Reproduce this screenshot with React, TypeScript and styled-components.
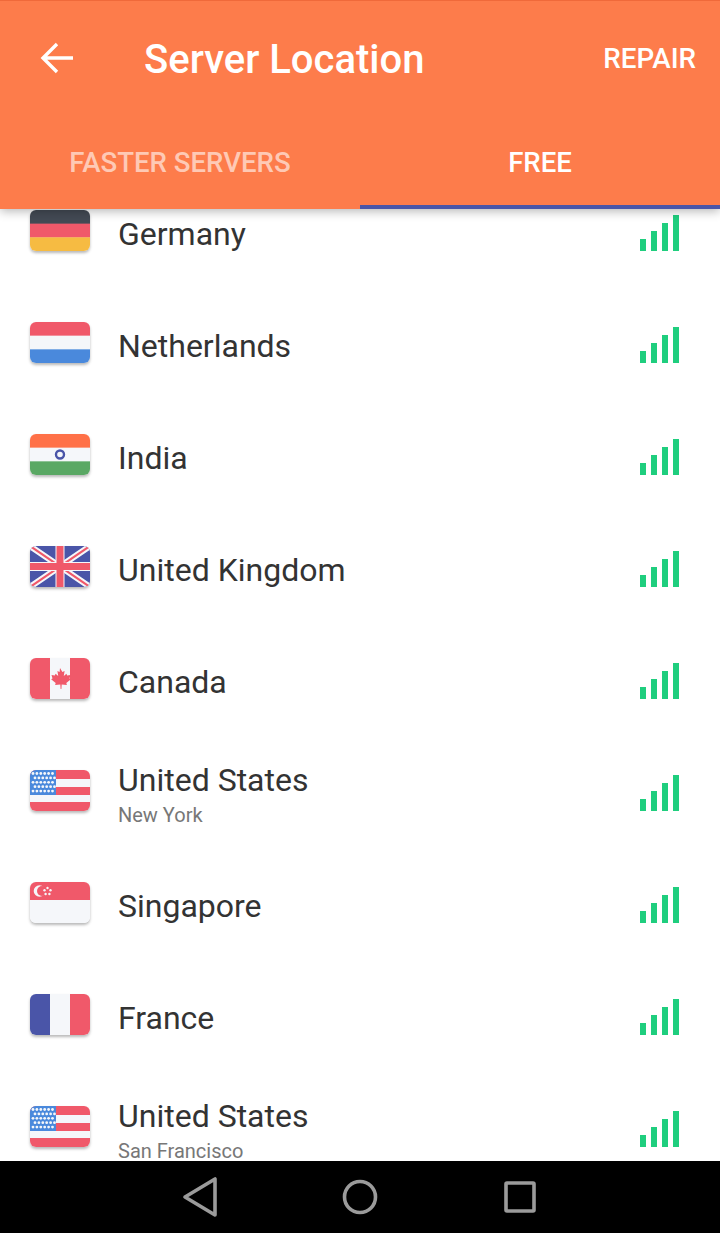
import React from "react";
import styled, { createGlobalStyle } from "styled-components";

const Global = createGlobalStyle`
  html, body { margin: 0; padding: 0; background: #fff; }
  body { font-family: Roboto, "Liberation Sans", sans-serif; }
`;

const Screen = styled.div`
  width: 720px;
  height: 1233px;
  display: flex;
  flex-direction: column;
  overflow: hidden;
  background: #fff;
`;
const Header = styled.header`
  position: relative;
  z-index: 1;
  flex: none;
  height: 209px;
  box-sizing: border-box;
  display: flex;
  flex-direction: column;
  background: #fd7c4b;
  border-top: 1px solid #f0693a;
  box-shadow: 0 2px 10px rgba(0, 0, 0, 0.3);
`;
const Toolbar = styled.div`
  height: 112px;
  display: flex;
  align-items: center;
  padding: 0 24px 0 40px;
  color: #fff;
  box-sizing: border-box;
`;
const BackIcon = styled.svg`
  width: 34px;
  height: 34px;
  flex: none;
  margin-right: 70px;
  margin-top: 2px;
`;
const Title = styled.h1`
  flex: 1;
  margin: 6px 0 0;
  font-size: 40px;
  line-height: 46px;
  font-weight: 500;
`;
const Action = styled.span`
  font-size: 27.8px;
  font-weight: 500;
  margin-top: 3px;
`;
const Tabs = styled.nav`
  flex: 1;
  display: flex;
`;
const Tab = styled.div<{ $active?: boolean }>`
  flex: 1;
  display: flex;
  align-items: center;
  justify-content: center;
  box-sizing: border-box;
  padding-top: 6px;
  font-size: 27.6px;
  font-weight: 500;
  color: ${(p) => (p.$active ? "#fff" : "rgba(255,255,255,0.6)")};
  border-bottom: 4px solid ${(p) => (p.$active ? "#4a55a8" : "transparent")};
`;
const List = styled.main`
  flex: 1;
  min-height: 0;
  overflow: hidden;
`;
const Rows = styled.div`
  margin-top: -31px;
`;
const Row = styled.div`
  height: 112px;
  display: flex;
  align-items: center;
  box-sizing: border-box;
  padding: 0 41px 0 30px;
`;
const FlagBox = styled.div`
  flex: none;
  width: 60px;
  height: 41px;
  margin: -7px 28px 0 0;
  border-radius: 6px;
  overflow: hidden;
  box-shadow: 0 2px 3px rgba(0, 0, 0, 0.28);
  svg {
    display: block;
    width: 100%;
    height: 100%;
  }
`;
const Labels = styled.div`
  flex: 1;
  min-width: 0;
`;
const Name = styled.div`
  font-size: 32px;
  line-height: 38px;
  color: #333;
`;
const Sub = styled.div`
  font-size: 20px;
  line-height: 24px;
  margin-top: 4px;
  color: #777;
`;
const Bars = styled.div`
  display: flex;
  align-items: flex-end;
  gap: 5px;
  height: 36px;
  margin-top: -2px;
`;
const Bar = styled.i<{ $h: number }>`
  display: block;
  width: 6px;
  height: ${(p) => p.$h}px;
  background: #1fce7e;
`;
const NavBar = styled.footer`
  flex: none;
  height: 72px;
  background: #000;
  position: relative;
  z-index: 1;
  display: flex;
  justify-content: center;
  align-items: center;
  gap: 108px;
`;
const NavIcon = styled.svg`
  width: 52px;
  height: 52px;
  fill: none;
  stroke: #9b9b9b;
  stroke-width: 3.6;
  stroke-linejoin: round;
`;

const red = "#f0596a", white = "#f5f7fa", blue = "#4a89dc", indigo = "#4a55a8";

const Stripes = ({ colors }: { colors: string[] }) => (
  <>
    {colors.map((c, i) => (
      <rect key={i} x="0" y={(i * 41) / colors.length} width="60" height={41 / colors.length + 0.3} fill={c} />
    ))}
  </>
);

const UsFlag = () => (
  <svg viewBox="0 0 60 41">
    <rect width="60" height="41" fill={red} />
    <rect y="9" width="60" height="8" fill={white} />
    <rect y="25" width="60" height="7" fill={white} />
    <rect width="26" height="25" fill={blue} />
    {[0, 1, 2, 3, 4].map((r) =>
      [0, 1, 2, 3, 4, 5].map((c) => (
        <circle key={`${r}-${c}`} cx={(r % 2 ? 5 : 3) + c * 3.9} cy={3.5 + r * 4.4} r="1.4" fill={white} />
      ))
    )}
  </svg>
);

const flags: Record<string, React.ReactNode> = {
  de: <svg viewBox="0 0 60 41"><Stripes colors={["#434a54", red, "#f6bb42"]} /></svg>,
  nl: <svg viewBox="0 0 60 41"><Stripes colors={[red, white, blue]} /></svg>,
  in: (
    <svg viewBox="0 0 60 41">
      <Stripes colors={["#ff7148", white, "#5aa864"]} />
      <circle cx="30" cy="20.5" r="4" fill="none" stroke={indigo} strokeWidth="2.4" />
    </svg>
  ),
  uk: (
    <svg viewBox="0 0 60 41">
      <rect width="60" height="41" fill={indigo} />
      <path d="M0 0L60 41M60 0L0 41" stroke={white} strokeWidth="6" />
      <path d="M0 0L60 41M60 0L0 41" stroke={red} strokeWidth="2.2" />
      <path d="M30 0V41M0 20.5H60" stroke={white} strokeWidth="9" />
      <path d="M30 0V41M0 20.5H60" stroke={red} strokeWidth="7" />
    </svg>
  ),
  ca: (
    <svg viewBox="0 0 60 41">
      <rect width="60" height="41" fill={white} />
      <rect width="20" height="41" fill={red} />
      <rect x="40" width="20" height="41" fill={red} />
      <path
        d="M30 10l2.4 4 2.2-1-.8 5 2.6-2.2.8 1.8 3.3-.5-1 3.3 1.4.8-4.6 3.8.6 2-5.2-.6-.3 4.6h-.8l-.3-4.6-5.2.6.6-2-4.6-3.8 1.4-.8-1-3.3 3.3.5.8-1.8 2.6 2.2-.8-5 2.2 1z"
        fill={red}
      />
    </svg>
  ),
  us: <UsFlag />,
  sg: (
    <svg viewBox="0 0 60 41">
      <rect width="60" height="41" fill={white} />
      <rect width="60" height="18" fill={red} />
      <circle cx="9.5" cy="9" r="5.8" fill={white} />
      <circle cx="12" cy="9" r="5" fill={red} />
      {[[17.5, 6], [20.5, 8.3], [19.4, 12], [15.6, 12], [14.5, 8.3]].map(([x, y]) => (
        <circle key={x} cx={x} cy={y} r="1.2" fill={white} />
      ))}
    </svg>
  ),
  fr: (
    <svg viewBox="0 0 60 41">
      <rect width="60" height="41" fill={white} />
      <rect width="20" height="41" fill={indigo} />
      <rect x="40" width="20" height="41" fill={red} />
    </svg>
  ),
};

const servers = [
  { flag: "de", name: "Germany" },
  { flag: "nl", name: "Netherlands" },
  { flag: "in", name: "India" },
  { flag: "uk", name: "United Kingdom" },
  { flag: "ca", name: "Canada" },
  { flag: "us", name: "United States", sub: "New York" },
  { flag: "sg", name: "Singapore" },
  { flag: "fr", name: "France" },
  { flag: "us", name: "United States", sub: "San Francisco" },
];

export default function App() {
  return (
    <Screen>
      <Global />
      <Header>
        <Toolbar>
          <BackIcon viewBox="0 0 34 34" fill="none" stroke="#fff" strokeWidth="3.4">
            <path d="M33 17H3M17 3L3 17l14 14" />
          </BackIcon>
          <Title>Server Location</Title>
          <Action>REPAIR</Action>
        </Toolbar>
        <Tabs>
          <Tab>FASTER SERVERS</Tab>
          <Tab $active>FREE</Tab>
        </Tabs>
      </Header>
      <List>
        <Rows>
          {servers.map((s, i) => (
            <Row key={i}>
              <FlagBox>{flags[s.flag]}</FlagBox>
              <Labels>
                <Name>{s.name}</Name>
                {s.sub && <Sub>{s.sub}</Sub>}
              </Labels>
              <Bars>
                {[12, 20, 28, 36].map((h) => (
                  <Bar key={h} $h={h} />
                ))}
              </Bars>
            </Row>
          ))}
        </Rows>
      </List>
      <NavBar>
        <NavIcon viewBox="0 0 52 52"><path d="M41 8V44L11 26Z" /></NavIcon>
        <NavIcon viewBox="0 0 52 52"><circle cx="26" cy="26" r="15.5" /></NavIcon>
        <NavIcon viewBox="0 0 52 52"><rect x="12" y="12" width="28" height="28" rx="1" /></NavIcon>
      </NavBar>
    </Screen>
  );
}
